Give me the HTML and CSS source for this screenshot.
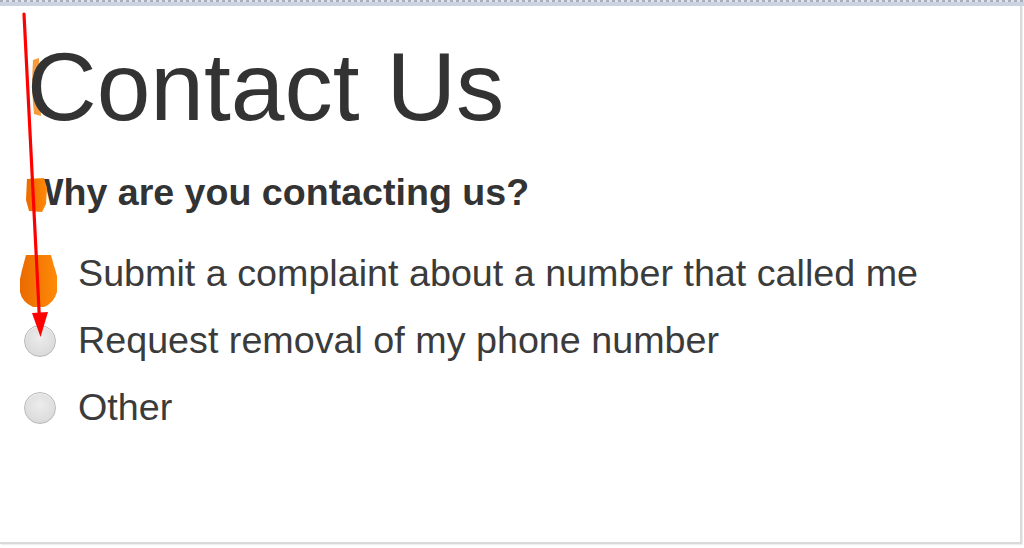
FILE: index.html
```html
<!DOCTYPE html>
<html lang="en">
<head>
<meta charset="utf-8">
<title>Contact Us</title>
<link rel="stylesheet" href="styles.css">
</head>
<body>
<div class="page">
  <div class="topbar"><div class="dots"></div></div>
  <main class="panel">
    <svg class="underlay" width="1024" height="548" viewBox="0 0 1024 548" aria-hidden="true">
      <path d="M33,60 L39,58 L41,116 L34,114 Q31,88 33,60 Z" fill="#f28a1c" opacity="0.85"/>
    </svg>
    <h1 class="title">Contact Us</h1>
    <p class="question">Why are you contacting us?</p>
    <ul class="options">
      <li><label class="option"><input type="radio" name="reason" class="radio"><span>Submit a complaint about a number that called me</span></label></li>
      <li><label class="option"><input type="radio" name="reason" class="radio"><span>Request removal of my phone number</span></label></li>
      <li><label class="option"><input type="radio" name="reason" class="radio"><span>Other</span></label></li>
    </ul>
  </main>
  <svg class="overlay" width="1024" height="548" viewBox="0 0 1024 548" aria-hidden="true">
    <defs>
      <linearGradient id="og" x1="0" y1="0" x2="1" y2="0">
        <stop offset="0" stop-color="#ea6a00"/>
        <stop offset="1" stop-color="#ff8a08"/>
      </linearGradient>
    </defs>
    <path d="M27,179 L44,178 L47,188 L46,204 L42,212 L29,211 L26,200 Z" fill="url(#og)"/>
    <path d="M26,255 L51,255 L54,266 L57,276 L57,292 Q54,303 44,307 L33,307 Q22,302 20,292 L20,279 L22,270 Z" fill="url(#og)"/>
    <line x1="24" y1="14" x2="39.4" y2="318" stroke="#ff0000" stroke-width="3.2" stroke-linecap="round"/>
    <polygon points="32,313 48,312 40.5,337" fill="#ff0000"/>
  </svg>
</div>
</body>
</html>
```
FILE: styles.css
```css
html, body {
  margin: 0;
  padding: 0;
  background: #ffffff;
}

.page {
  position: relative;
  width: 1024px;
  height: 548px;
  overflow: hidden;
  font-family: "Liberation Sans", Arial, sans-serif;
  color: #333333;
}

.topbar {
  height: 6px;
  background: #cbd3e2;
}

.dots {
  height: 2px;
  background: repeating-linear-gradient(90deg, #a9b0bc 0 3px, #dfe3ea 3px 6px);
}

.panel {
  position: relative;
  display: flow-root;
  width: 1022px;
  height: 538px;
  border-right: 2px solid #dadada;
  border-bottom: 2px solid #dadada;
  box-shadow: 1px 1px 0 #eeeeee;
  padding: 0 0 0 24px;
  box-sizing: border-box;
}

.underlay {
  position: absolute;
  left: 0;
  top: -6px;
  z-index: 0;
  pointer-events: none;
}

.title {
  position: relative;
  z-index: 1;
  margin: 28px 0 0 3px;
  font-size: 96.5px;
  line-height: 106px;
  font-weight: normal;
  color: #333333;
}

.question {
  position: relative;
  z-index: 1;
  margin: 32px 0 0 4px;
  font-size: 37.6px;
  line-height: 41px;
  font-weight: bold;
  color: #333333;
}

.options {
  list-style: none;
  margin: 27px 0 0 0;
  padding: 0;
}

.option {
  display: flex;
  align-items: center;
  height: 67px;
  font-size: 37.7px;
  color: #3b3b3b;
}

.radio {
  appearance: none;
  -webkit-appearance: none;
  margin: 0 22px 0 0;
  width: 32px;
  height: 32px;
  border-radius: 50%;
  border: 1.5px solid #b9b9b9;
  background: radial-gradient(circle at 50% 40%, #ececec 0%, #dedede 60%, #d2d2d2 100%);
  box-shadow: inset 0 1px 1px #f6f6f6;
  box-sizing: border-box;
  flex: none;
}

.overlay {
  position: absolute;
  left: 0;
  top: 0;
  z-index: 5;
  pointer-events: none;
}
```
